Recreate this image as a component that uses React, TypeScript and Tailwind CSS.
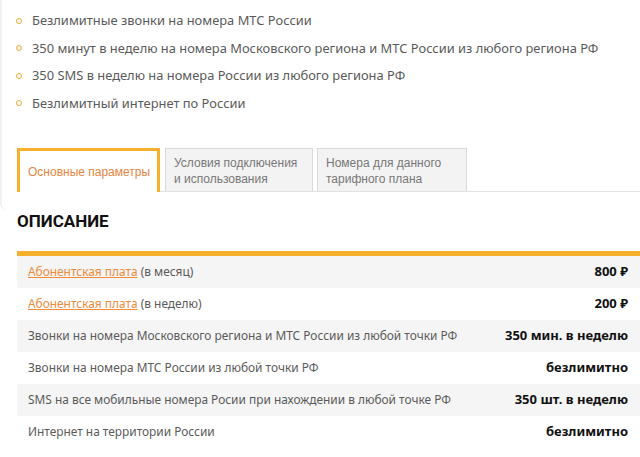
import React from "react";

const bullets = [
  "Безлимитные звонки на номера МТС России",
  "350 минут в неделю на номера Московского региона и МТС России из любого региона РФ",
  "350 SMS в неделю на номера России из любого региона РФ",
  "Безлимитный интернет по России",
];

type Row = { link?: string; label: string; value: string };
const rows: Row[] = [
  { link: "Абонентская плата", label: " (в месяц)", value: "800 ₽" },
  { link: "Абонентская плата", label: " (в неделю)", value: "200 ₽" },
  { label: "Звонки на номера Московского региона и МТС России из любой точки РФ", value: "350 мин. в неделю" },
  { label: "Звонки на номера МТС России из любой точки РФ", value: "безлимитно" },
  { label: "SMS на все мобильные номера Росии при нахождении в любой точке РФ", value: "350 шт. в неделю" },
  { label: "Интернет на территории России", value: "безлимитно" },
];

export default function App() {
  return (
    <div className="w-[640px] h-[457px] overflow-hidden bg-white" style={{ fontFamily: '"Noto Sans", sans-serif' }}>
      <div className="h-[210px] border-l-2 border-[#f1f1f1] rounded-bl-[6px] pt-[7px]">
        <ul className="flex flex-col">
          {bullets.map((b) => (
            <li key={b} className="h-[27.5px] flex items-center text-[12.9px] text-[#5a5a5a]">
              <span className="ml-[14px] mr-[10px] w-[6px] h-[6px] rounded-full border-[1.5px] border-[#f0a830]" />
              {b}
            </li>
          ))}
        </ul>
      </div>
      <div className="-mt-[62px] ml-[17px] flex items-end border-b border-[#e2e2e2] h-[44px]" style={{ fontFamily: '"Liberation Sans", Arial, sans-serif' }}>
        <div className="w-[143px] h-[44px] border-t-[3px] border-l-[3px] border-r-[3px] border-[#f5b12e] bg-white flex items-center pl-[8px] text-[12px] text-[#e8853d] -mb-px">
          Основные параметры
        </div>
        <div className="ml-[5px] w-[148px] h-[43px] border border-b-0 border-[#d9d9d9] bg-[#f3f3f3] flex items-center pl-[8px] pt-[1px] text-[12px] leading-[16px] text-[#777]">
          Условия подключения<br />и использования
        </div>
        <div className="ml-[4px] w-[150px] h-[43px] border border-b-0 border-[#d9d9d9] bg-[#f3f3f3] flex items-center pl-[8px] pt-[1px] text-[12px] leading-[16px] text-[#777]">
          Номера для данного<br />тарифного плана
        </div>
      </div>
      <div className="ml-[17px] mt-[19px] text-[17px] font-bold text-[#111] leading-[20px]" style={{ fontFamily: 'Roboto, sans-serif' }}>
        ОПИСАНИЕ
      </div>
      <div className="ml-[17px] mt-[20px] border-t-[5px] border-[#f5b12e]">
        {rows.map((r, i) => (
          <div key={i} className={`h-[32px] flex items-center justify-between pl-[11px] pr-[12px] text-[11.9px] ${i % 2 === 0 ? "bg-[#f5f5f5]" : "bg-white"}`}>
            <span className="text-[#5a5a5a]">
              {r.link && <span className="text-[#ee8a3a] underline">{r.link}</span>}
              {r.label}
            </span>
            <span className="font-bold text-[#111] text-[13px]">{r.value}</span>
          </div>
        ))}
      </div>
    </div>
  );
}
